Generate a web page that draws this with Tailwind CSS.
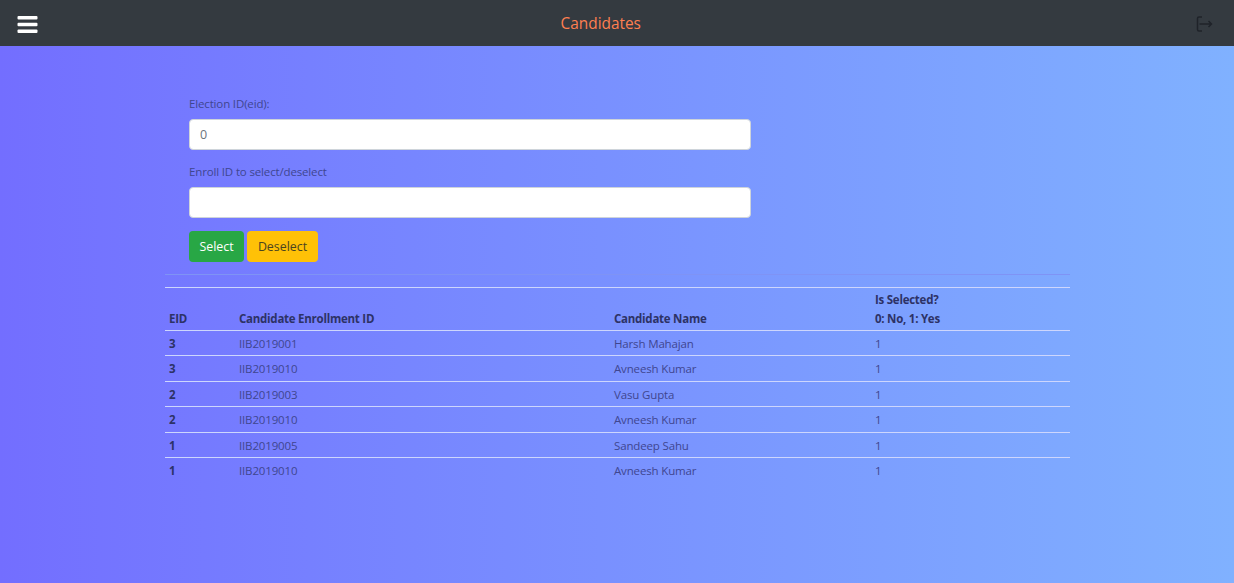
<!DOCTYPE html>
<html lang="en">

<head>
    <meta charset="UTF-8">
    <title>Candidates</title>
    <script src="https://cdn.jsdelivr.net/npm/@tailwindcss/browser@4"></script>
</head>

<body class="h-[583px] overflow-hidden bg-linear-to-r from-[#736eff] to-[#80b1ff] font-['Open_Sans','Noto_Sans',sans-serif] text-[11.5px] tracking-[-0.15px] text-[#3f4690]">
    <header class="flex h-[46px] items-center justify-between bg-[#343a40] pl-[16.5px] pr-[21px]">
        <svg class="mt-[3px] w-[21px] h-[19px]" viewBox="0 0 21 19">
            <rect x="0.5" y="1" width="20" height="3.4" rx="1" fill="#fff" />
            <rect x="0.5" y="7.8" width="20" height="3.4" rx="1" fill="#fff" />
            <rect x="0.5" y="14.6" width="20" height="3.4" rx="1" fill="#fff" />
        </svg>
        <h1 class="mr-[32px] pt-[2px] text-[15.4px] tracking-normal text-[#ff7f50]">Candidates</h1>
        <svg class="mt-[2px] w-[17px] h-[18px]" viewBox="0 0 17 18" fill="none" stroke="#1f2329" stroke-width="1.5">
            <path d="M6 2H3a1.5 1.5 0 0 0-1.5 1.5v11A1.5 1.5 0 0 0 3 16h3" />
            <path d="M3.5 9H15.5M12.5 6l3 3-3 3" />
        </svg>
    </header>

    <main class="ml-[165px] w-[905px] pt-[50px]">
        <form class="w-[586px] pl-[24px]">
            <label class="block h-[23px] leading-[16px]">Election ID(eid):</label>
            <input type="text" value="0" class="block h-[31px] w-[562px] rounded-[4px] border border-[#ced4da] bg-white px-[10px] text-[12.5px] text-[#6c757d] outline-none">
            <label class="mt-[14px] block h-[23px] leading-[16px]">Enroll ID to select/deselect</label>
            <input type="text" class="block h-[31px] w-[562px] rounded-[4px] border border-[#ced4da] bg-white px-[10px] text-[12.5px] text-[#6c757d] outline-none">
            <div class="mt-[13px] flex gap-[3px]">
                <button type="button" class="h-[31px] w-[55px] rounded-[4px] bg-[#28a745] pt-[2px] text-[12.4px] tracking-normal text-[#fff]">Select</button>
                <button type="button" class="h-[31px] w-[71px] rounded-[4px] bg-[#ffc107] pt-[2px] text-[12.4px] tracking-normal text-[#4a4420]">Deselect</button>
            </div>
        </form>
        <hr class="mt-[12px] border-[#7f93f5]">
        <table class="mt-[12px] w-full table-fixed border-collapse">
            <colgroup>
                <col class="w-[70px]">
                <col class="w-[375px]">
                <col class="w-[261px]">
                <col>
            </colgroup>
            <thead class="text-left font-bold tracking-[-0.25px] text-[#2d3266]">
                <tr class="h-[42.5px] border-y border-[#cdd6fd] align-bottom leading-[19px]">
                    <th class="px-[4px] pb-[2px]">EID</th>
                    <th class="px-[4px] pb-[2px]">Candidate Enrollment ID</th>
                    <th class="px-[4px] pb-[2px]">Candidate Name</th>
                    <th class="px-[4px] pb-[2px]">Is Selected?<br>0: No, 1: Yes</th>
                </tr>
            </thead>
            <tbody>
                <tr class="h-[25.5px] border-b border-[#cdd6fd]">
                    <th class="px-[4px] pt-[1px] text-left text-[#2d3266]">3</th>
                    <td class="px-[4px] pt-[1px]">IIB2019001</td>
                    <td class="px-[4px] pt-[1px]">Harsh Mahajan</td>
                    <td class="px-[4px] pt-[1px]">1</td>
                </tr>
                <tr class="h-[25.5px] border-b border-[#cdd6fd]">
                    <th class="px-[4px] pt-[1px] text-left text-[#2d3266]">3</th>
                    <td class="px-[4px] pt-[1px]">IIB2019010</td>
                    <td class="px-[4px] pt-[1px]">Avneesh Kumar</td>
                    <td class="px-[4px] pt-[1px]">1</td>
                </tr>
                <tr class="h-[25.5px] border-b border-[#cdd6fd]">
                    <th class="px-[4px] pt-[1px] text-left text-[#2d3266]">2</th>
                    <td class="px-[4px] pt-[1px]">IIB2019003</td>
                    <td class="px-[4px] pt-[1px]">Vasu Gupta</td>
                    <td class="px-[4px] pt-[1px]">1</td>
                </tr>
                <tr class="h-[25.5px] border-b border-[#cdd6fd]">
                    <th class="px-[4px] pt-[1px] text-left text-[#2d3266]">2</th>
                    <td class="px-[4px] pt-[1px]">IIB2019010</td>
                    <td class="px-[4px] pt-[1px]">Avneesh Kumar</td>
                    <td class="px-[4px] pt-[1px]">1</td>
                </tr>
                <tr class="h-[25.5px] border-b border-[#cdd6fd]">
                    <th class="px-[4px] pt-[1px] text-left text-[#2d3266]">1</th>
                    <td class="px-[4px] pt-[1px]">IIB2019005</td>
                    <td class="px-[4px] pt-[1px]">Sandeep Sahu</td>
                    <td class="px-[4px] pt-[1px]">1</td>
                </tr>
                <tr class="h-[25.5px]">
                    <th class="px-[4px] pt-[1px] text-left text-[#2d3266]">1</th>
                    <td class="px-[4px] pt-[1px]">IIB2019010</td>
                    <td class="px-[4px] pt-[1px]">Avneesh Kumar</td>
                    <td class="px-[4px] pt-[1px]">1</td>
                </tr>
            </tbody>
        </table>
    </main>
</body>

</html>
